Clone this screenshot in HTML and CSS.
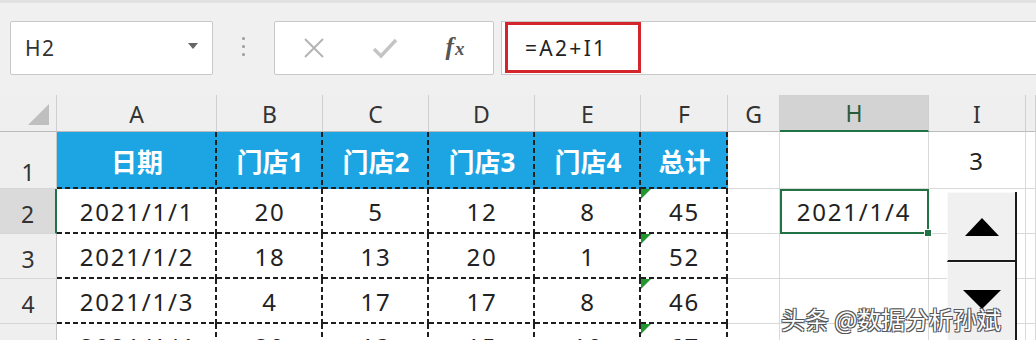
FILE: index.html
```html
<!DOCTYPE html>
<html lang="zh-CN">
<head>
  <meta charset="UTF-8">
  <title>Excel - 数值调节钮</title>
  <link rel="stylesheet" href="styles.css">
</head>
<body>
  <!-- name box + formula bar -->
  <div class="toolbar">
    <div class="namebox"><span>H2</span><i class="caret"></i></div>
    <div class="grip"><i></i><i></i><i></i></div>
    <div class="fxbtns">
      <svg width="22" height="22" viewBox="0 0 22 22"><path d="M2 2 L20 20 M20 2 L2 20" stroke="#b4b4b4" stroke-width="2" fill="none"/></svg>
      <svg width="26" height="22" viewBox="0 0 26 22"><path d="M2 12 L9 19 L24 3" stroke="#c4c4c4" stroke-width="3.4" fill="none"/></svg>
      <span class="fx">f<small>x</small></span>
    </div>
    <div class="formula"><div class="edit">=A2+I1</div></div>
  </div>

  <div class="sheet">
    <div class="ch corner"><i></i></div>
    <div class="ch">A</div><div class="ch">B</div><div class="ch">C</div><div class="ch">D</div>
    <div class="ch">E</div><div class="ch">F</div><div class="ch">G</div><div class="ch sel">H</div>
    <div class="ch">I</div><div class="ch"></div>

    <div class="rh r1">1</div>
    <div class="c t hd">日期</div><div class="c t hd">门店1</div><div class="c t hd">门店2</div>
    <div class="c t hd">门店3</div><div class="c t hd">门店4</div><div class="c t hd">总计</div>
    <div class="c"></div><div class="c"></div><div class="c">3</div><div class="c"></div>

    <div class="rh sel">2</div>
    <div class="c t">2021/1/1</div><div class="c t">20</div><div class="c t">5</div>
    <div class="c t">12</div><div class="c t">8</div><div class="c t err">45</div>
    <div class="c"></div><div class="c cur">2021/1/4</div><div class="c"></div><div class="c"></div>

    <div class="rh">3</div>
    <div class="c t">2021/1/2</div><div class="c t">18</div><div class="c t">13</div>
    <div class="c t">20</div><div class="c t">1</div><div class="c t err">52</div>
    <div class="c"></div><div class="c"></div><div class="c"></div><div class="c"></div>

    <div class="rh">4</div>
    <div class="c t">2021/1/3</div><div class="c t">4</div><div class="c t">17</div>
    <div class="c t">17</div><div class="c t">8</div><div class="c t err">46</div>
    <div class="c"></div><div class="c"></div><div class="c"></div><div class="c"></div>

    <div class="rh">5</div>
    <div class="c t">2021/1/4</div><div class="c t">20</div><div class="c t">13</div>
    <div class="c t">15</div><div class="c t">10</div><div class="c t err">67</div>
    <div class="c"></div><div class="c"></div><div class="c"></div><div class="c"></div>
  </div>

  <!-- spin button form control floating over the grid -->
  <div class="spin">
    <div class="btn up"><i></i></div>
    <div class="btn down"><i></i></div>
  </div>

  <div class="mark">头条 @数据分析孙斌</div>
</body>
</html>
```

FILE: styles.css
```css
body {
  margin: 0;
  width: 1036px;
  height: 340px;
  overflow: hidden;
  position: relative;
  background: #fff;
  font-family: "Noto Sans", "Noto Sans CJK SC", sans-serif;
  color: #222;
}

/* ---- toolbar ---- */
.toolbar {
  height: 95px;
  box-sizing: border-box;
  display: flex;
  align-items: flex-start;
  padding: 18px 0 0 10px;
  background: #f0f0f0;
  border-top: 3px solid #e2e2e2;
}

.namebox {
  width: 203px;
  height: 54px;
  box-sizing: border-box;
  display: flex;
  align-items: center;
  justify-content: space-between;
  padding: 0 14px 0 14px;
  background: #fff;
  border: 1px solid #c8c8c8;
  border-radius: 2px;
  font-size: 21px;
  letter-spacing: 1.5px;
  color: #333;
}
.caret {
  width: 0;
  height: 0;
  border-left: 5px solid transparent;
  border-right: 5px solid transparent;
  border-top: 6px solid #666;
  margin-bottom: 4px;
}

.grip {
  width: 61px;
  height: 54px;
  box-sizing: border-box;
  padding-bottom: 4px;
  display: flex;
  flex-direction: column;
  align-items: center;
  justify-content: center;
  gap: 5px;
}
.grip i {
  width: 3px;
  height: 3px;
  border-radius: 50%;
  background: #999;
}

.fxbtns {
  width: 220px;
  height: 54px;
  box-sizing: border-box;
  display: grid;
  grid-template-columns: 78px 64px 1fr;
  align-items: center;
  justify-items: center;
  background: #fff;
  border: 1px solid #c8c8c8;
  border-radius: 2px;
}
.fx {
  font-family: "Liberation Serif", serif;
  font-style: italic;
  font-weight: bold;
  font-size: 25px;
  color: #555;
  margin-bottom: 3px;
}
.fx small {
  font-size: 19px;
  margin-left: 1px;
}

.formula {
  flex: 1;
  height: 54px;
  margin-left: 7px;
  box-sizing: border-box;
  display: flex;
  padding: 0 0 1px 3px;
  background: #fff;
  border: 1px solid #c8c8c8;
  border-right: 0;
}
.edit {
  width: 136px;
  box-sizing: border-box;
  display: flex;
  align-items: center;
  padding-left: 17px;
  border: 3px solid #d4252d;
  font-size: 21px;
  letter-spacing: 2.3px;
  color: #222;
}

/* ---- sheet grid ---- */
.sheet {
  display: grid;
  grid-template-columns: 57px 160px 106px 106px 106px 106px 87px 52px 149px 97px 1fr;
  grid-template-rows: 37px 57px 45px 45px 45px 45px;
}

.ch {
  display: flex;
  align-items: flex-end;
  justify-content: center;
  padding-bottom: 1px;
  box-sizing: border-box;
  background: #efefef;
  border-right: 1px solid #cfcfcf;
  border-bottom: 1px solid #bcbcbc;
  font-size: 23px;
  color: #333;
}
.ch.sel {
  background: #d3d3d3;
  border-bottom: 2px solid #217346;
  color: #2a5a3c;
}
.corner {
  justify-content: flex-end;
  padding: 0 7px 6px 0;
}
.corner i {
  width: 0;
  height: 0;
  border-left: 21px solid transparent;
  border-bottom: 21px solid #bfbfbf;
}

.rh {
  display: flex;
  align-items: center;
  justify-content: center;
  padding-top: 6px;
  box-sizing: border-box;
  background: #efefef;
  border-right: 1px solid #c8c8c8;
  border-bottom: 1px solid #d6d6d6;
  font-size: 23px;
  color: #333;
}
.rh.r1 {
  align-items: flex-end;
  padding: 0;
}
.rh.sel {
  background: #dadada;
  border-right: 2px solid #217346;
}

.c {
  display: flex;
  align-items: center;
  justify-content: center;
  box-sizing: border-box;
  border-right: 1px solid #d9d9d9;
  border-bottom: 1px solid #d9d9d9;
  font-size: 24px;
  letter-spacing: 1.8px;
  white-space: nowrap;
}

/* dashed table borders */
.c.t {
  border: 0;
  background-image:
    repeating-linear-gradient(90deg, #1e1e1e 0 5px, transparent 5px 8px),
    repeating-linear-gradient(180deg, #1e1e1e 0 5px, transparent 5px 8px);
  background-size: 100% 2px, 2px 100%;
  background-position: left bottom, right top;
  background-repeat: no-repeat;
}
.c.hd {
  background-color: #1ca4e3;
  color: #fff;
  font-weight: bold;
  font-size: 26px;
  letter-spacing: 0;
}

.err {
  position: relative;
}
.err::before {
  content: "";
  position: absolute;
  top: 0;
  left: 0;
  border-top: 10px solid #23962f;
  border-right: 10px solid transparent;
}

.cur {
  position: relative;
  z-index: 2;
  outline: 2px solid #217346;
  outline-offset: -2px;
}
.cur::after {
  content: "";
  position: absolute;
  right: -4px;
  bottom: -4px;
  width: 6px;
  height: 6px;
  background: #217346;
  border: 1px solid #fff;
}

/* ---- spin button ---- */
.spin {
  position: absolute;
  left: 947px;
  top: 192px;
  width: 70px;
  z-index: 3;
  box-sizing: border-box;
  border-right: 2px solid #1a1a1a;
}
.spin .btn {
  height: 70px;
  box-sizing: border-box;
  display: flex;
  align-items: center;
  justify-content: center;
  background: #f0f0f0;
  border-top: 1px solid #fafafa;
  border-left: 1px solid #fafafa;
}
.spin .up {
  border-bottom: 2px solid #1a1a1a;
}
.spin .down {
  height: 80px;
  align-items: flex-start;
  padding-top: 27px;
}
.spin .up i {
  width: 0;
  height: 0;
  border-left: 17px solid transparent;
  border-right: 17px solid transparent;
  border-bottom: 18px solid #000;
}
.spin .down i {
  width: 0;
  height: 0;
  border-left: 19px solid transparent;
  border-right: 19px solid transparent;
  border-top: 19px solid #000;
}

.mark {
  position: absolute;
  left: 781px;
  top: 301px;
  z-index: 4;
  font-family: "Noto Sans CJK SC", sans-serif;
  font-size: 24px;
  color: #fff;
  white-space: nowrap;
  text-shadow: 1px 1px 0 #555, -1px -1px 0 #555, 1px -1px 0 #555, -1px 1px 0 #555;
}
```
